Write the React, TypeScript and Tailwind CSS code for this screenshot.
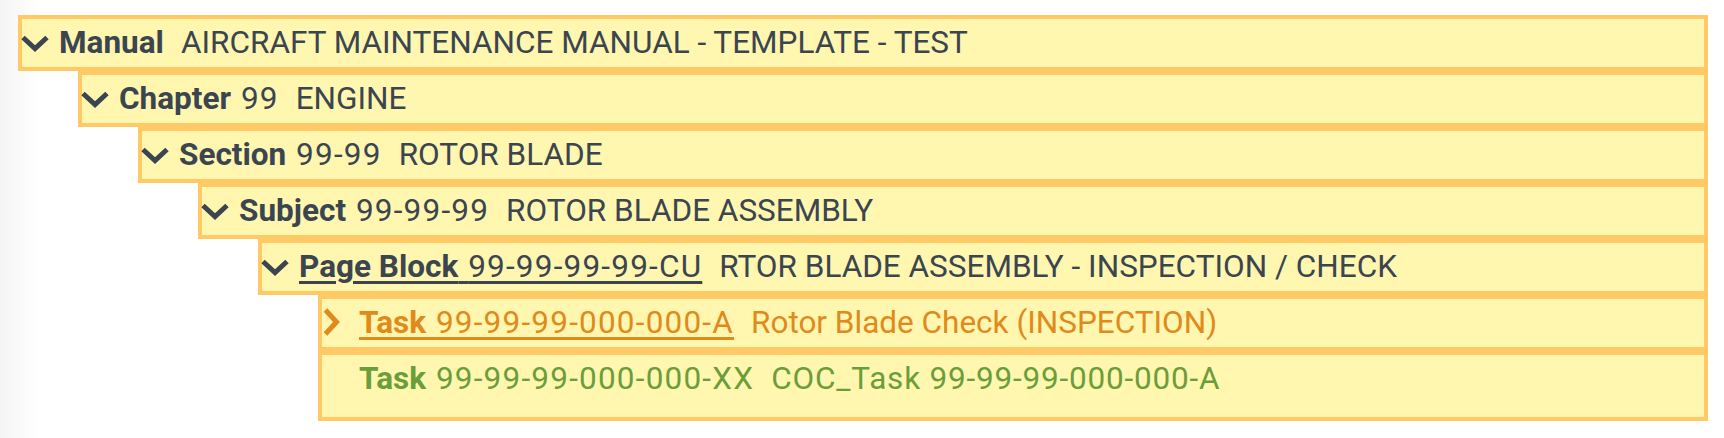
type Tone = "dark" | "orange" | "green";

type TreeRow = {
  level: number;
  label: string;
  code?: string;
  title: string;
  titleClass?: string;
  icon: "down" | "right" | "none";
  tone: Tone;
  link?: boolean;
  last?: boolean;
};

const ROWS: TreeRow[] = [
  { level: 0, label: "Manual", title: "AIRCRAFT MAINTENANCE MANUAL - TEMPLATE - TEST", icon: "down", tone: "dark" },
  { level: 1, label: "Chapter", code: "99", title: "ENGINE", icon: "down", tone: "dark" },
  { level: 2, label: "Section", code: "99-99", title: "ROTOR BLADE", icon: "down", tone: "dark" },
  { level: 3, label: "Subject", code: "99-99-99", title: "ROTOR BLADE ASSEMBLY", icon: "down", tone: "dark" },
  {
    level: 4,
    label: "Page Block",
    code: "99-99-99-99-CU",
    title: "RTOR BLADE ASSEMBLY - INSPECTION / CHECK",
    icon: "down",
    tone: "dark",
    link: true,
  },
  {
    level: 5,
    label: "Task",
    code: "99-99-99-000-000-A",
    title: "Rotor Blade Check (INSPECTION)",
    icon: "right",
    tone: "orange",
    link: true,
  },
  {
    level: 5,
    label: "Task",
    code: "99-99-99-000-000-XX",
    title: "COC_Task 99-99-99-000-000-A",
    titleClass: "tracking-[0.8px]",
    icon: "none",
    tone: "green",
    last: true,
  },
];

const INDENT = ["ml-0", "ml-[60px]", "ml-[120px]", "ml-[180px]", "ml-[240px]", "ml-[300px]"];

const TONE_CLASS: Record<Tone, string> = {
  dark: "text-[#3b4550]",
  orange: "text-[#e08a1c]",
  green: "text-[#6b9e3b]",
};

function ChevronDown() {
  return (
    <svg className="-ml-[1px]" width="28" height="17" viewBox="0 0 28 17" fill="none">
      <path d="M2 2.5 L14 13.5 L26 2.5" stroke="currentColor" strokeWidth="5" />
    </svg>
  );
}

function ChevronRight() {
  return (
    <svg className="ml-[1px] -mt-[3px]" width="18" height="28" viewBox="0 0 18 28" fill="none">
      <path d="M2.5 2 L13.5 14 L2.5 26" stroke="currentColor" strokeWidth="5" />
    </svg>
  );
}

function Row({ row }: { row: TreeRow }) {
  // the space keeps the underline running from label to code
  const head = (
    <>
      <span className="font-bold">{row.label}</span>
      {row.code ? (
        <>
          <span className="tracking-[2px]"> </span>
          <span className="tracking-[1.2px]">{row.code}</span>
        </>
      ) : null}
    </>
  );

  return (
    <div
      className={`${INDENT[row.level]} border-4 border-[#ffca66] bg-[#fff6b0] ${row.last ? "pb-[14px]" : ""}`}
    >
      <div className={`flex h-[48px] items-center whitespace-nowrap ${TONE_CLASS[row.tone]}`}>
        <span className="flex w-[37px] shrink-0 items-center">
          {row.icon === "down" ? <ChevronDown /> : null}
          {row.icon === "right" ? <ChevronRight /> : null}
        </span>
        {row.link ? (
          <span className="underline decoration-[2.5px] underline-offset-[4px]">{head}</span>
        ) : (
          <span>{head}</span>
        )}
        <span className={`ml-[17px] ${row.titleClass ?? ""}`}>{row.title}</span>
      </div>
    </div>
  );
}

export default function App() {
  return (
    <div className="min-h-[438px] w-full bg-[linear-gradient(to_right,#f4f4f4,#ffffff_38px)] pt-[15px] font-['Roboto',sans-serif] text-[31.5px] leading-none">
      <div className="ml-[18px] flex w-[1690px] flex-col">
        {ROWS.map((row, i) => (
          <Row key={i} row={row} />
        ))}
      </div>
    </div>
  );
}
